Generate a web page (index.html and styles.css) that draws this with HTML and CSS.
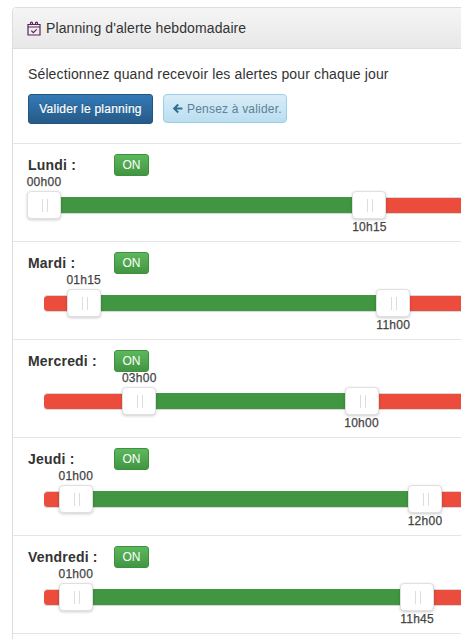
FILE: index.html
```html
<!DOCTYPE html>
<html lang="fr">
<head>
<meta charset="utf-8">
<title>Planning d'alerte hebdomadaire</title>
<link rel="stylesheet" href="styles.css">
</head>
<body>
<section class="panel">
  <header class="panel-heading">
    <svg class="cal" viewBox="0 0 14 14" width="14" height="15" aria-hidden="true"><path d="M1 3h12v10.500H1zM1 5.500h12M3.500 3V1.600a1 1 0 0 1 2 0V3M8.500 3V1.600a1 1 0 0 1 2 0V3M4.300 9.200l2 2 3.400-3.400"/></svg>
    <span>Planning d'alerte hebdomadaire</span>
  </header>
  <div class="intro">
    <p>Sélectionnez quand recevoir les alertes pour chaque jour</p>
    <div class="actions">
      <button class="btn-primary">Valider le planning</button>
      <div class="hint">
        <svg class="arrow" viewBox="0 0 12 12" width="11" height="11" aria-hidden="true"><path d="M6 .8.8 6 6 11.200l1.600-1.600-2.500-2.400h6.300V4.800H5.100l2.500-2.400z"/></svg>
        <span>Pensez à valider.</span>
      </div>
    </div>
  </div>
  <div class="day">
    <div class="day-head"><span class="day-name">Lundi :</span><span class="on">ON</span></div>
    <div class="slider"><div class="track">
      <div class="fill" style="left:0;width:42.71%"></div>
      <div class="handle" style="left:0%"><span class="tip top">00h00</span></div>
      <div class="handle" style="left:42.71%"><span class="tip bottom">10h15</span></div>
    </div></div>
  </div>
  <div class="day">
    <div class="day-head"><span class="day-name">Mardi :</span><span class="on">ON</span></div>
    <div class="slider"><div class="track">
      <div class="fill" style="left:5.21%;width:40.62%"></div>
      <div class="handle" style="left:5.21%"><span class="tip top">01h15</span></div>
      <div class="handle" style="left:45.83%"><span class="tip bottom">11h00</span></div>
    </div></div>
  </div>
  <div class="day">
    <div class="day-head"><span class="day-name">Mercredi :</span><span class="on">ON</span></div>
    <div class="slider"><div class="track">
      <div class="fill" style="left:12.5%;width:29.17%"></div>
      <div class="handle" style="left:12.5%"><span class="tip top">03h00</span></div>
      <div class="handle" style="left:41.67%"><span class="tip bottom">10h00</span></div>
    </div></div>
  </div>
  <div class="day">
    <div class="day-head"><span class="day-name">Jeudi :</span><span class="on">ON</span></div>
    <div class="slider"><div class="track">
      <div class="fill" style="left:4.17%;width:45.83%"></div>
      <div class="handle" style="left:4.17%"><span class="tip top">01h00</span></div>
      <div class="handle" style="left:50%"><span class="tip bottom">12h00</span></div>
    </div></div>
  </div>
  <div class="day">
    <div class="day-head"><span class="day-name">Vendredi :</span><span class="on">ON</span></div>
    <div class="slider"><div class="track">
      <div class="fill" style="left:4.17%;width:44.79%"></div>
      <div class="handle" style="left:4.17%"><span class="tip top">01h00</span></div>
      <div class="handle" style="left:48.96%"><span class="tip bottom">11h45</span></div>
    </div></div>
  </div>
  <div class="day"></div>
</section>
</body>
</html>
```
FILE: styles.css
```css
* { box-sizing: border-box; }
html, body { overflow: hidden; height: 100%; }
body {
  margin: 0;
  padding: 7px 0 0 12px;
  width: 900px;
  background: #fff;
  color: #333;
  font-family: "Liberation Sans", Arial, sans-serif;
  font-size: 14px;
  line-height: 20px;
}
.panel {
  border: 1px solid #ddd;
  border-radius: 4px;
  background: #fff;
  box-shadow: 0 1px 1px rgba(0,0,0,.05);
}
.panel-heading {
  display: flex;
  align-items: center;
  gap: 5px;
  height: 41px;
  padding: 0 14px;
  letter-spacing: .1px;
  background: linear-gradient(to bottom, #f5f5f5, #e8e8e8);
  border-bottom: 1px solid #ddd;
  border-radius: 3px 3px 0 0;
}
.cal { fill: none; stroke: #5a2458; stroke-width: 1.2; }
.intro { padding: 15px 15px 0; height: 94px; }
.intro p { margin: 0 0 10px; letter-spacing: .13px; }
.actions { display: flex; gap: 10px; }
.btn-primary {
  width: 125px;
  height: 30px;
  padding: 0;
  font: 12px/18px "Liberation Sans", Arial, sans-serif;
  letter-spacing: .25px;
  -webkit-text-stroke: .2px #fff;
  color: #fff;
  text-shadow: 0 -1px 0 rgba(0,0,0,.2);
  background: linear-gradient(to bottom, #337ab7, #265a88);
  border: 1px solid #245580;
  border-radius: 3px;
}
.hint {
  display: flex;
  align-items: center;
  gap: 4px;
  width: 124px;
  height: 29px;
  padding: 0 8px;
  font-size: 12px;
  letter-spacing: .2px;
  white-space: nowrap;
  color: #5f7f93;
  background: linear-gradient(to bottom, #d9edf7, #b9def0);
  border: 1px solid #9acfea;
  border-radius: 4px;
}
.arrow { fill: #31708f; flex: none; }
.day {
  height: 98px;
  padding: 10px 15px 0;
  border-top: 1px solid #e5e5e5;
}
.day-head { display: flex; align-items: center; height: 22px; }
.day-name { width: 86px; font-weight: 700; letter-spacing: .2px; }
.on {
  width: 35px;
  height: 22px;
  font-size: 12px;
  line-height: 20px;
  text-align: center;
  color: #fff;
  background: linear-gradient(to bottom, #5cb85c, #419641);
  border: 1px solid #3e8f3e;
  border-radius: 3px;
}
.slider { padding: 21px 0 0 16px; }
.track {
  position: relative;
  width: 762px;
  height: 17px;
  background: #ec4c3c;
  border-top: 1px solid #d8d8d8;
  border-bottom: 1px solid #d8d8d8;
  border-radius: 4px;
}
.fill { position: absolute; top: -1px; bottom: 0; background: #419641; }
.handle {
  position: absolute;
  top: -7px;
  width: 34px;
  height: 28px;
  margin-left: -17px;
  background: #fff;
  border: 1px solid #e0e0e0;
  border-radius: 4px;
  box-shadow: 0 1px 3px rgba(0,0,0,.2);
}
.handle::before {
  content: "";
  position: absolute;
  left: 14px;
  top: 7px;
  width: 4px;
  height: 13px;
  border-left: 1px solid #ddd;
  border-right: 1px solid #ddd;
}
.tip {
  position: absolute;
  left: 50%;
  transform: translateX(-50%);
  font-size: 12px;
  line-height: 14px;
  letter-spacing: .25px;
  -webkit-text-stroke: .25px #444;
  color: #444;
}
.tip.top { top: -17px; }
.tip.bottom { top: 28px; }
```
